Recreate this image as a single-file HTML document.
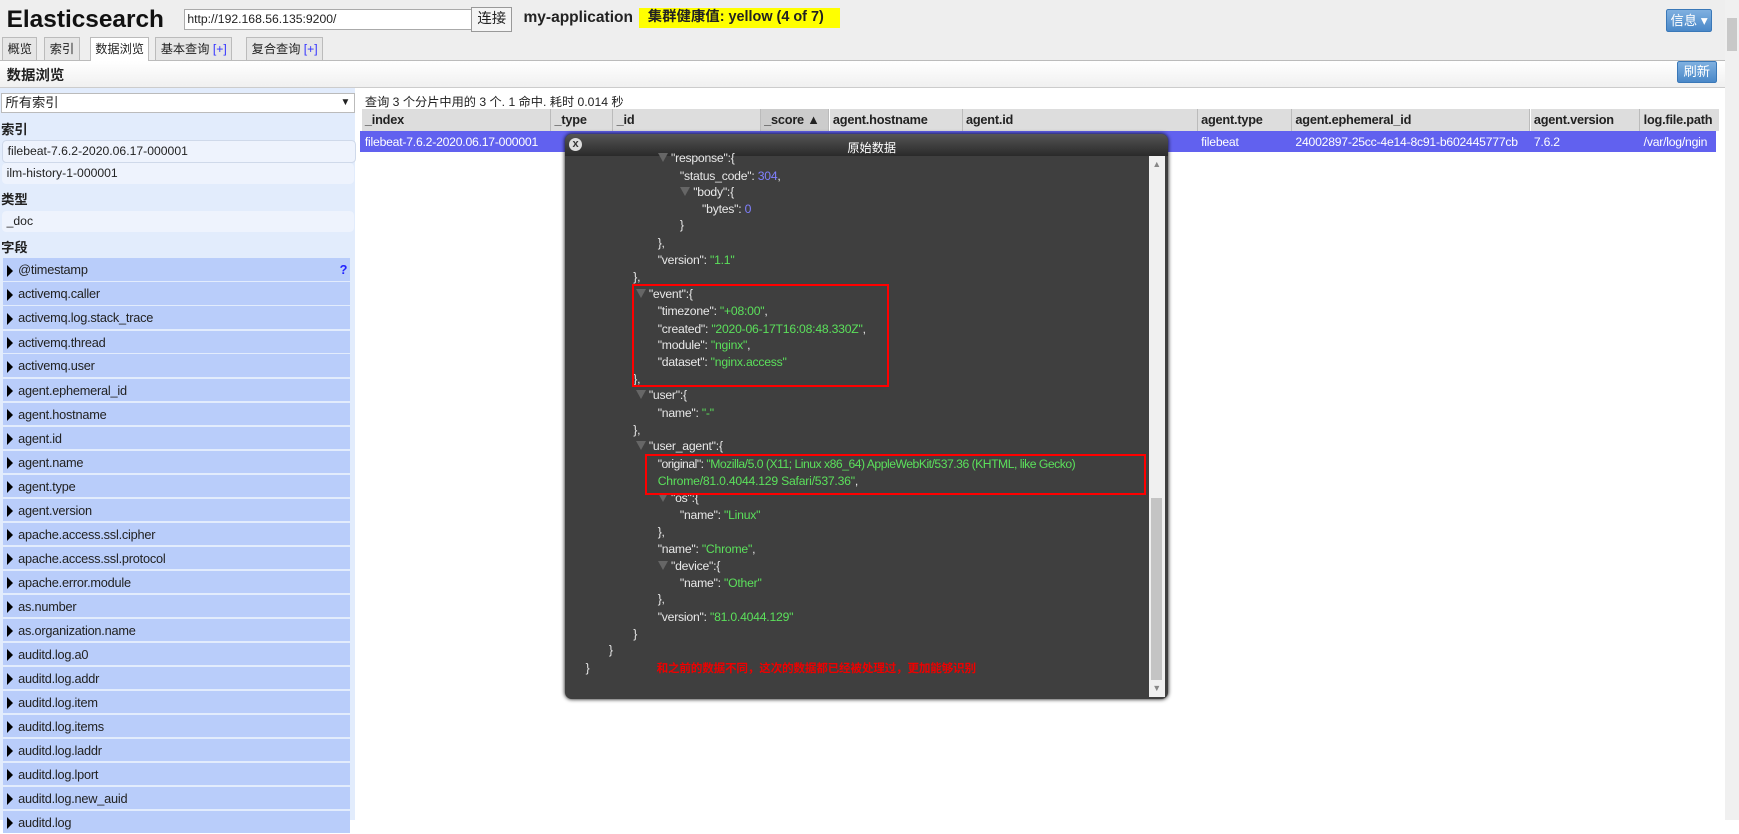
<!DOCTYPE html>
<html><head><meta charset="utf-8"><style>
html{zoom:1.1091}
body{margin:0;width:1568px;height:739px;overflow:hidden;font-family:"Liberation Sans","Noto Sans CJK SC",sans-serif;font-size:12px;color:#222;background:#fff;position:relative}
.a{position:absolute;white-space:nowrap}
#hdr{left:0;top:0;width:1555px;height:54px;background:#eee;border-bottom:1px solid #bbb}
.tab{position:absolute;top:33px;height:20px;border:1px solid #bbb;border-bottom:none;background:#e6e6e6;font-size:11px;line-height:21px;padding:0 4px}
.btn{position:absolute;background:linear-gradient(#7fb0e0,#4a88c8);color:#fff;border:1px solid #3a78b8;border-radius:2px;font-size:12px;text-align:center}
#bar2{left:0;top:55px;width:1555px;height:23px;background:linear-gradient(#fff,#f0f0f0);border-bottom:1px solid #ccc}
#side{left:0;top:79px;width:320px;height:660px;background:#e2ecfc}
.fr{position:absolute;left:3px;width:313px;height:20px;background:#b9cdfa;line-height:21px;font-size:11.5px;letter-spacing:-0.2px}
.fr b{display:inline-block;width:0;height:0;border-top:6px solid transparent;border-bottom:6px solid transparent;border-left:6px solid #000;margin:0 5px 0 3px;vertical-align:-2px}
.idx{position:absolute;left:2px;width:313px;height:19px;background:#eef3fd;border-radius:4px;line-height:19px;padding-left:4px;font-size:11px}
.th{position:absolute;top:98px;height:20px;background:#ddd;border-right:1px solid #bbb;line-height:20px;font-weight:bold;padding-left:3px;font-size:11.5px;letter-spacing:-0.2px}
.td{position:absolute;top:118px;height:19px;line-height:20px;color:#fff;font-size:11px;padding-left:3px;letter-spacing:-0.2px}
#modal{left:509px;top:121px;width:544px;height:509px;background:#3f3f3f;border-radius:6px;box-shadow:0 0 4px #000;overflow:hidden}
.j{position:absolute;color:#e8e8e8;font-size:11px;white-space:nowrap;letter-spacing:-0.2px}
.g{color:#5be05b}.n{color:#8080ff}
.t{display:inline-block;width:0;height:0;border-left:5px solid transparent;border-right:5px solid transparent;border-top:9px solid #666;margin-right:3px}
.rb{position:absolute;border:2px solid #f00}
</style></head><body>
<div class="a" id="hdr"></div>
<div class="a" style="left:6px;top:5px;font-size:22px;font-weight:bold;color:#111">Elasticsearch</div>
<div class="a" style="left:166px;top:8px;width:256px;height:17px;border:1px solid #aaa;background:#fff;font-size:11px;line-height:17px;padding-left:2px">http://192.168.56.135:9200/</div>
<div class="a" style="left:425px;top:6px;width:35px;height:21px;border:1px solid #999;background:#f4f4f4;line-height:21px;text-align:center;font-size:13px">连接</div>
<div class="a" style="left:472px;top:8px;font-size:14px;font-weight:bold">my-application</div>
<div class="a" style="left:576px;top:7px;width:173px;height:18px;background:#ff0;font-size:13px;font-weight:bold;line-height:18px;padding-left:8px">集群健康值: yellow (4 of 7)</div>
<div class="btn" style="left:1502px;top:8px;width:40px;height:19px;line-height:19px">信息 ▾</div>
<div class="tab" style="left:2px">概览</div>
<div class="tab" style="left:40px">索引</div>
<div class="tab" style="left:81px;background:#fff;height:21px">数据浏览</div>
<div class="tab" style="left:140px">基本查询 <span style="color:#33f">[+]</span></div>
<div class="tab" style="left:222px">复合查询 <span style="color:#33f">[+]</span></div>
<div class="a" id="bar2"></div>
<div class="a" style="left:6px;top:58px;font-size:13px;font-weight:bold">数据浏览</div>
<div class="btn" style="left:1512px;top:55px;width:34px;height:18px;line-height:18px">刷新</div>
<div class="a" id="side"></div>
<div class="a" style="left:1px;top:84px;width:314px;height:16px;background:#fff;border:1px solid #bbb;line-height:17px;font-size:12px;padding-left:3px">所有索引<span style="position:absolute;right:3px;font-size:9px">▼</span></div>
<div class="a" style="left:1px;top:107px;font-weight:bold">索引</div>
<div class="idx" style="top:126px;border:1px solid #cfd9ea">filebeat-7.6.2-2020.06.17-000001</div>
<div class="idx" style="top:147px">ilm-history-1-000001</div>
<div class="a" style="left:1px;top:170px;font-weight:bold">类型</div>
<div class="idx" style="top:190px">_doc</div>
<div class="a" style="left:1px;top:214px;font-weight:bold">字段</div>
<div class="fr" style="top:233px"><b></b>@timestamp<span style="position:absolute;right:3px;color:#22f;font-weight:bold">?</span></div>
<div class="fr" style="top:254.6px"><b></b>activemq.caller</div>
<div class="fr" style="top:276.3px"><b></b>activemq.log.stack_trace</div>
<div class="fr" style="top:298px"><b></b>activemq.thread</div>
<div class="fr" style="top:319.6px"><b></b>activemq.user</div>
<div class="fr" style="top:341.3px"><b></b>agent.ephemeral_id</div>
<div class="fr" style="top:363px"><b></b>agent.hostname</div>
<div class="fr" style="top:384.6px"><b></b>agent.id</div>
<div class="fr" style="top:406.3px"><b></b>agent.name</div>
<div class="fr" style="top:428px"><b></b>agent.type</div>
<div class="fr" style="top:449.6px"><b></b>agent.version</div>
<div class="fr" style="top:471.3px"><b></b>apache.access.ssl.cipher</div>
<div class="fr" style="top:493px"><b></b>apache.access.ssl.protocol</div>
<div class="fr" style="top:514.6px"><b></b>apache.error.module</div>
<div class="fr" style="top:536.3px"><b></b>as.number</div>
<div class="fr" style="top:558px"><b></b>as.organization.name</div>
<div class="fr" style="top:579.6px"><b></b>auditd.log.a0</div>
<div class="fr" style="top:601.3px"><b></b>auditd.log.addr</div>
<div class="fr" style="top:623px"><b></b>auditd.log.item</div>
<div class="fr" style="top:644.6px"><b></b>auditd.log.items</div>
<div class="fr" style="top:666.3px"><b></b>auditd.log.laddr</div>
<div class="fr" style="top:688px"><b></b>auditd.log.lport</div>
<div class="fr" style="top:709.6px"><b></b>auditd.log.new_auid</div>
<div class="fr" style="top:731.3px"><b></b>auditd.log</div>
<div class="a" style="left:329px;top:83px;font-size:11px">查询 3 个分片中用的 3 个. 1 命中. 耗时 0.014 秒</div>
<div class="th" style="left:326px;width:167px">_index</div>
<div class="th" style="left:497px;width:52px">_type</div>
<div class="th" style="left:553px;width:129px">_id</div>
<div class="th" style="left:686px;width:58px;background:#ccc">_score ▲</div>
<div class="th" style="left:748px;width:116px">agent.hostname</div>
<div class="th" style="left:868px;width:208px">agent.id</div>
<div class="th" style="left:1080px;width:81px">agent.type</div>
<div class="th" style="left:1165px;width:211px">agent.ephemeral_id</div>
<div class="th" style="left:1380px;width:95px">agent.version</div>
<div class="th" style="left:1479px;width:68px;border:none">log.file.path</div>
<div class="a" style="left:325px;top:118px;width:1222px;height:19px;background:#6161ef"></div>
<div class="td" style="left:326px">filebeat-7.6.2-2020.06.17-000001</div>
<div class="td" style="left:1080px">filebeat</div>
<div class="td" style="left:1165px">24002897-25cc-4e14-8c91-b602445777cb</div>
<div class="td" style="left:1380px">7.6.2</div>
<div class="td" style="left:1479px">/var/log/ngin</div>
<div class="a" style="left:1555px;top:0;width:13px;height:739px;background:#f0f0f0"></div>
<div class="a" style="left:1557px;top:16px;width:9px;height:30px;background:#c8c8c8"></div>
<div class="a" id="modal"></div>
<div class="a" style="left:509px;top:121px;width:544px;height:20px;background:linear-gradient(#555,#2a2a2a);border-radius:6px 6px 0 0"></div>
<div class="a" style="left:513px;top:124px;width:12px;height:12px;border-radius:6px;background:#ddd;color:#333;font-size:10px;font-weight:bold;line-height:12px;text-align:center">x</div>
<div class="a" style="left:764px;top:124px;color:#fff;font-size:11px">原始数据</div>
<div class="a" style="left:1036px;top:141px;width:14px;height:487px;background:#f0f0f0"></div>
<div class="a" style="left:1038px;top:449px;width:10px;height:164px;background:#c4c4c4"></div>
<div class="a" style="left:1039px;top:143px;font-size:8px;color:#888">▲</div>
<div class="a" style="left:1039px;top:616px;font-size:8px;color:#888">▼</div>
<div class="j" style="left:593px;top:136px"><span class="t"></span>"response":{</div>
<div class="j" style="left:613px;top:152px">"status_code": <span class="n">304</span>,</div>
<div class="j" style="left:613px;top:167px"><span class="t"></span>"body":{</div>
<div class="j" style="left:633px;top:182px">"bytes": <span class="n">0</span></div>
<div class="j" style="left:613px;top:197px">}</div>
<div class="j" style="left:593px;top:213px">},</div>
<div class="j" style="left:593px;top:228px">"version": <span class="g">"1.1"</span></div>
<div class="j" style="left:571px;top:243px">},</div>
<div class="j" style="left:573px;top:259px"><span class="t"></span>"event":{</div>
<div class="j" style="left:593px;top:274px">"timezone": <span class="g">"+08:00"</span>,</div>
<div class="j" style="left:593px;top:290px">"created": <span class="g">"2020-06-17T16:08:48.330Z"</span>,</div>
<div class="j" style="left:593px;top:305px">"module": <span class="g">"nginx"</span>,</div>
<div class="j" style="left:593px;top:320px">"dataset": <span class="g">"nginx.access"</span></div>
<div class="j" style="left:571px;top:335px">},</div>
<div class="j" style="left:573px;top:350px"><span class="t"></span>"user":{</div>
<div class="j" style="left:593px;top:366px">"name": <span class="g">"-"</span></div>
<div class="j" style="left:571px;top:381px">},</div>
<div class="j" style="left:573px;top:396px"><span class="t"></span>"user_agent":{</div>
<div class="j" style="left:593px;top:412px;letter-spacing:-0.45px">"original": <span class="g">"Mozilla/5.0 (X11; Linux x86_64) AppleWebKit/537.36 (KHTML, like Gecko)</span></div>
<div class="j" style="left:593px;top:427px"><span class="g">Chrome/81.0.4044.129 Safari/537.36"</span>,</div>
<div class="j" style="left:593px;top:443px"><span class="t"></span>"os":{</div>
<div class="j" style="left:613px;top:458px">"name": <span class="g">"Linux"</span></div>
<div class="j" style="left:593px;top:473px">},</div>
<div class="j" style="left:593px;top:489px">"name": <span class="g">"Chrome"</span>,</div>
<div class="j" style="left:593px;top:504px"><span class="t"></span>"device":{</div>
<div class="j" style="left:613px;top:519px">"name": <span class="g">"Other"</span></div>
<div class="j" style="left:593px;top:534px">},</div>
<div class="j" style="left:593px;top:550px">"version": <span class="g">"81.0.4044.129"</span></div>
<div class="j" style="left:571px;top:565px">}</div>
<div class="j" style="left:549px;top:580px">}</div>
<div class="j" style="left:528px;top:596px">}</div>
<div class="j" style="left:592px;top:594px;color:#e00;font-size:10.5px;font-weight:bold">和之前的数据不同，这次的数据都已经被处理过，更加能够识别</div>
<div class="rb" style="left:570px;top:256px;width:228px;height:89px"></div>
<div class="rb" style="left:582px;top:409px;width:448px;height:34px"></div>
</body></html>
